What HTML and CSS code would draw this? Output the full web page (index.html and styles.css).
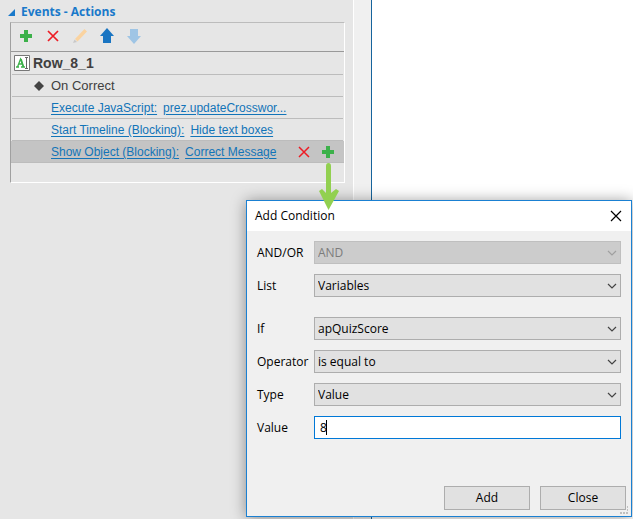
FILE: index.html
```
<!DOCTYPE html>
<html lang="en">
<head>
<meta charset="utf-8">
<title>Events - Actions</title>
<link rel="stylesheet" href="styles.css">
</head>
<body>
<div class="workspace">
  <aside class="sidebar">
    <h2 class="heading">
      <svg width="7" height="7" viewBox="0 0 7 7" aria-hidden="true"><path d="M7 0v7H0z" fill="#1979ca"/></svg>
      Events - Actions
    </h2>
    <section class="panel">
      <div class="toolbar">
        <button class="tool" type="button" aria-label="Add action"><svg width="14" height="14" viewBox="0 0 14 14"><path d="M5 1h4v4h4v4H9v4H5V9H1V5h4z" fill="#3cb14a"/></svg></button>
        <button class="tool" type="button" aria-label="Delete action"><svg width="14" height="14" viewBox="0 0 14 14"><path d="M2 2l10 10M12 2L2 12" stroke="#ed1c24" stroke-width="1.7"/></svg></button>
        <button class="tool" type="button" aria-label="Edit action" disabled><svg width="16" height="16" viewBox="0 0 16 16"><path d="M3 11L12.500 1L15 3.500L5.500 13.500z" fill="#fad3a0"/><path d="M2.500 11.500L5 14l-4 1z" fill="#c8c8c8"/></svg></button>
        <button class="tool" type="button" aria-label="Move up"><svg width="14" height="16" viewBox="0 0 14 16"><path d="M7 0l7 8h-3v7H3V8H0z" fill="#1a75c2"/></svg></button>
        <button class="tool" type="button" aria-label="Move down" disabled><svg width="14" height="16" viewBox="0 0 14 16"><path d="M3 1h8v7h3l-7 8-7-8h3z" fill="#9fc5e5"/></svg></button>
      </div>
      <div class="list">
        <div class="row target">
          <svg width="16" height="16" viewBox="0 0 16 16" aria-hidden="true"><path d="M.5.5h15v15H.5z" fill="#fff" stroke="#777"/><path d="M2 12h3M7 12h4M3.500 12L6.500 4l3 8M4.500 9h4" fill="none" stroke="#3cb14a" stroke-width="1.300"/><path d="M7 4l2.500 8" stroke="#3cb14a" stroke-width="1.500"/><path d="M11 2.500h3M11 13.500h3M12.500 3v10" stroke="#666"/></svg>
          Row_8_1
        </div>
        <div class="row event">
          <svg width="10" height="10" viewBox="0 0 10 10" aria-hidden="true"><path d="M5 0l5 5-5 5-5-5z" fill="#444"/></svg>
          On Correct
        </div>
        <div class="row action"><a href="#">Execute JavaScript:</a><a href="#">prez.updateCrosswor...</a></div>
        <div class="row action"><a href="#">Start Timeline (Blocking):</a><a href="#">Hide text boxes</a></div>
        <div class="row action selected">
          <a href="#">Show Object (Blocking):</a><a href="#">Correct Message</a>
          <span class="row-tools">
            <button class="tool" type="button" aria-label="Remove"><svg width="14" height="14" viewBox="0 0 14 14"><path d="M2 2l10 10M12 2L2 12" stroke="#ed1c24" stroke-width="1.500"/></svg></button>
            <button class="tool" type="button" aria-label="Add condition"><svg width="14" height="14" viewBox="0 0 14 14"><path d="M5 1h4v4h4v4H9v4H5V9H1V5h4z" fill="#3cb14a"/></svg></button>
          </span>
        </div>
      </div>
    </section>
  </aside>
  <div class="divider"></div>
  <main class="canvas"></main>
</div>

<form class="dialog" role="dialog" aria-labelledby="dialog-title">
  <header class="titlebar">
    <h1 class="title" id="dialog-title">Add Condition</h1>
    <button class="tool" type="button" aria-label="Close dialog"><svg width="12" height="12" viewBox="0 0 12 12"><path d="M1 1l10 10M11 1L1 11" stroke="#000" stroke-width="1.200"/></svg></button>
  </header>
  <div class="fields">
    <label for="join">AND/OR</label>
    <div class="control">
      <select id="join" disabled><option>AND</option></select>
      <svg class="chevron pale" viewBox="0 0 10 6"><path d="M1 1l4 4 4-4"/></svg>
    </div>
    <label for="list">List</label>
    <div class="control">
      <select id="list"><option>Variables</option></select>
      <svg class="chevron" viewBox="0 0 10 6"><path d="M1 1l4 4 4-4"/></svg>
    </div>
  </div>
  <div class="fields">
    <label for="variable">If</label>
    <div class="control">
      <select id="variable"><option>apQuizScore</option></select>
      <svg class="chevron" viewBox="0 0 10 6"><path d="M1 1l4 4 4-4"/></svg>
    </div>
    <label for="operator">Operator</label>
    <div class="control">
      <select id="operator"><option>is equal to</option></select>
      <svg class="chevron" viewBox="0 0 10 6"><path d="M1 1l4 4 4-4"/></svg>
    </div>
    <label for="type">Type</label>
    <div class="control">
      <select id="type"><option>Value</option></select>
      <svg class="chevron" viewBox="0 0 10 6"><path d="M1 1l4 4 4-4"/></svg>
    </div>
    <label for="value">Value</label>
    <div class="control">
      <input id="value" type="text" value="8">
      <span class="caret"></span>
    </div>
  </div>
  <footer class="buttons">
    <button class="push" type="button">Add</button>
    <button class="push" type="button">Close</button>
  </footer>
  <svg class="grip" width="8" height="8" viewBox="0 0 8 8" aria-hidden="true"><path d="M0 6h2v2H0zM3 6h2v2H3zM6 6h2v2H6zM7 3h1v2H7zM7 0h1v2H7z" fill="#bfbfbf"/></svg>
</form>
<svg class="pointer" width="20" height="47" viewBox="0 0 20 47" aria-hidden="true"><path d="M7 3Q7 0 9.500 0T12 3v27l5-4 3 2-10.500 19L0 28l3-2 4 4z" fill="#92d050"/></svg>
</body>
</html>
```

FILE: styles.css
```
* {
  box-sizing: border-box;
}

body {
  margin: 0;
  position: relative;
  min-height: 100vh;
  background: #e6e6e6;
  color: #000;
  font: 12px/16px "Open Sans", "Noto Sans", sans-serif;
}

button,
input,
select {
  font: inherit;
  color: inherit;
}

.workspace {
  display: flex;
  min-height: 100vh;
}

.sidebar {
  flex: 0 0 353px;
  padding: 4px 8px 0 10px;
}

.divider {
  flex: 0 0 19px;
  background: #f0f0f0;
  border-left: 1px solid #fff;
  border-right: 1px solid #17649c;
}

.canvas {
  flex: 1;
  background: #fff;
}

.heading {
  display: flex;
  align-items: center;
  gap: 6px;
  margin: 0 0 2px -2px;
  color: #1979ca;
  font-size: 12px;
  font-weight: 700;
}

.panel {
  border: 1px solid #fff;
  border-top-color: #bcbcbc;
  border-left-color: #a0a0a0;
}

.tool {
  display: grid;
  place-items: center;
  width: 16px;
  height: 16px;
  padding: 0;
  border: 0;
  background: none;
}

.toolbar {
  display: flex;
  align-items: center;
  gap: 11px;
  height: 28px;
  padding: 0 0 2px 7px;
}

.list {
  min-height: 131px;
  border-top: 1px solid #999;
  color: #404040;
  font: 12px/16px "Liberation Sans", Arial, sans-serif;
}

.row {
  display: flex;
  align-items: center;
  height: 22px;
  margin: 0 1px;
  border-bottom: 1px solid #bcbcbc;
}

.target {
  height: 23px;
  gap: 3px;
  padding-left: 2px;
  font-size: 14px;
  font-weight: 700;
}

.event {
  gap: 7px;
  padding-left: 22px;
  font-size: 13px;
}

.action {
  gap: 6px;
  padding-left: 39px;
}

.action a {
  color: #1274b8;
  text-underline-offset: 2px;
}

.selected {
  margin: 0;
  padding: 0 8px 0 40px;
  background: #c4c4c4;
}

.row-tools {
  display: flex;
  gap: 8px;
  margin-left: auto;
}

.dialog {
  position: absolute;
  top: 200px;
  right: 1px;
  left: 246px;
  padding-bottom: 6px;
  border: 1px solid #1a80d2;
  background: #f0f0f0;
  box-shadow: 0 1px 14px rgba(0, 0, 0, 0.4);
}

.titlebar {
  display: flex;
  align-items: center;
  justify-content: space-between;
  height: 30px;
  margin-bottom: 10px;
  padding: 0 7px 0 8px;
  background: #fff;
}

.title {
  margin: 0;
  font-size: 12px;
  font-weight: 400;
}

.fields {
  display: grid;
  grid-template-columns: 57px 1fr;
  row-gap: 10px;
  align-items: center;
  margin-bottom: 20px;
  padding: 0 10px;
}

.control {
  position: relative;
}

select,
input {
  display: block;
  width: 100%;
  height: 23px;
  margin: 0;
  padding: 0 3px;
  border: 1px solid #adadad;
  border-radius: 0;
  background: #e1e1e1;
  appearance: none;
}

select:disabled {
  border-color: #bfbfbf;
  background: #ccc;
  color: #7c7c7c;
  opacity: 1;
}

input {
  padding: 0 5px;
  border-color: #0078d7;
  background: #fff;
  outline: 0;
}

.chevron {
  position: absolute;
  top: 9px;
  right: 4px;
  width: 10px;
  height: 6px;
  fill: none;
  stroke: #444;
  stroke-width: 1.2;
  pointer-events: none;
}

.pale {
  stroke: #a0a0a0;
}

.caret {
  position: absolute;
  top: 4px;
  left: 12px;
  width: 1px;
  height: 15px;
  background: #000;
}

.buttons {
  display: flex;
  justify-content: flex-end;
  gap: 10px;
  margin-top: 47px;
  padding-right: 5px;
}

.push {
  width: 86px;
  height: 24px;
  padding: 0;
  border: 1px solid #adadad;
  background: #e1e1e1;
}

.grip {
  position: absolute;
  right: 3px;
  bottom: 2px;
}

.pointer {
  position: absolute;
  top: 163px;
  left: 319px;
}
```
